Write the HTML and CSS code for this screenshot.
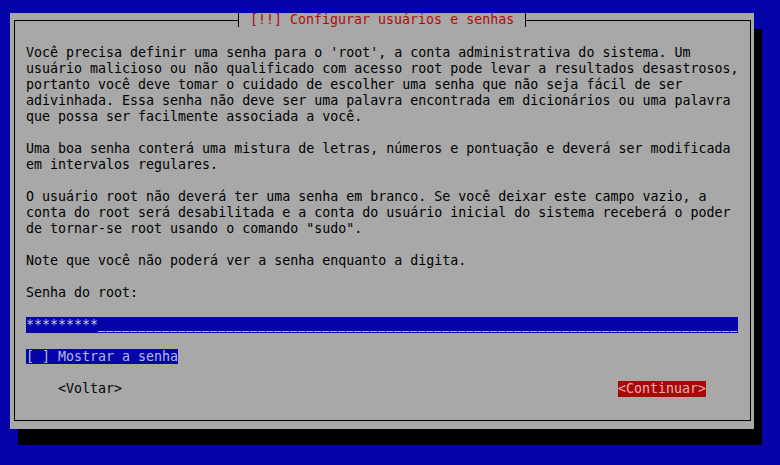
FILE: index.html
```html
<!DOCTYPE html>
<html lang="pt-BR">
<head>
<meta charset="utf-8">
<title>Configurar usuários e senhas</title>
<link rel="stylesheet" href="styles.css">
</head>
<body>
<div class="screen">
  <div class="dialog">
    <fieldset class="frame">
      <legend class="title">[!!] Configurar usuários e senhas</legend>
      <div class="content">
        <p>Você precisa definir uma senha para o 'root', a conta administrativa do sistema. Um<br>usuário malicioso ou não qualificado com acesso root pode levar a resultados desastrosos,<br>portanto você deve tomar o cuidado de escolher uma senha que não seja fácil de ser<br>adivinhada. Essa senha não deve ser uma palavra encontrada em dicionários ou uma palavra<br>que possa ser facilmente associada a você.</p>
        <p>Uma boa senha conterá uma mistura de letras, números e pontuação e deverá ser modificada<br>em intervalos regulares.</p>
        <p>O usuário root não deverá ter uma senha em branco. Se você deixar este campo vazio, a<br>conta do root será desabilitada e a conta do usuário inicial do sistema receberá o poder<br>de tornar-se root usando o comando "sudo".</p>
        <p>Note que você não poderá ver a senha enquanto a digita.</p>
        <p>Senha do root:</p>
        <div class="field"><span class="stars">*********</span><span class="blank">________________________________________________________________________________</span></div>
        <div class="check-row"><span class="check">[ ] Mostrar a senha</span></div>
        <div class="buttons">
          <span class="btn">&lt;Voltar&gt;</span>
          <span class="btn btn-active">&lt;Continuar&gt;</span>
        </div>
      </div>
    </fieldset>
  </div>
</div>
</body>
</html>
```

FILE: styles.css
```css
html, body {
  margin: 0;
  padding: 0;
  background: #0404a8;
}

body {
  width: 780px;
  height: 465px;
  overflow: hidden;
  font-family: "DejaVu Sans Mono", "Liberation Mono", monospace;
  font-size: 13.3px;
  line-height: 16px;
  color: #000;
}

.screen {
  padding: 13px 0 0 10px;
}

.dialog {
  width: 744px;
  height: 416px;
  box-sizing: border-box;
  padding: 0 3px 8px 4px;
  background: #a8a8a8;
  box-shadow: 8px 16px 0 #000;
  display: flex;
  flex-direction: column;
}

.frame {
  flex: 1;
  margin: 0;
  padding: 0;
  min-width: 0;
  border: 1px solid #000;
}

.title {
  margin-left: 223px;
  padding: 0 11px 0 11px;
  height: 14px;
  line-height: 14px;
  border-left: 1px solid #000;
  border-right: 1px solid #000;
  color: #b00808;
  white-space: pre;
}

.content {
  padding: 18px 0 0 11px;
}

.content p {
  margin: 0 0 16px 0;
  white-space: nowrap;
}

.field {
  display: flex;
  width: 712px;
  height: 16px;
  background: #0404a8;
  color: #c8c8e8;
  white-space: pre;
  margin-bottom: 16px;
}

.stars {
  display: block;
}

.blank {
  display: block;
  flex: 1;
  color: transparent;
  overflow: hidden;
  background: repeating-linear-gradient(90deg, #b8b8e0 0 7px, transparent 7px 8px) left 14px / 100% 1px no-repeat;
}

.check-row {
  margin-bottom: 16px;
}

.check {
  background: #0404a8;
  color: #b8b8ec;
  white-space: pre;
}

.buttons {
  display: flex;
  padding-left: 32px;
}

.btn {
  white-space: pre;
}

.btn-active {
  margin-left: 496px;
  background: #a80808;
  color: #f0b0b0;
}
```
